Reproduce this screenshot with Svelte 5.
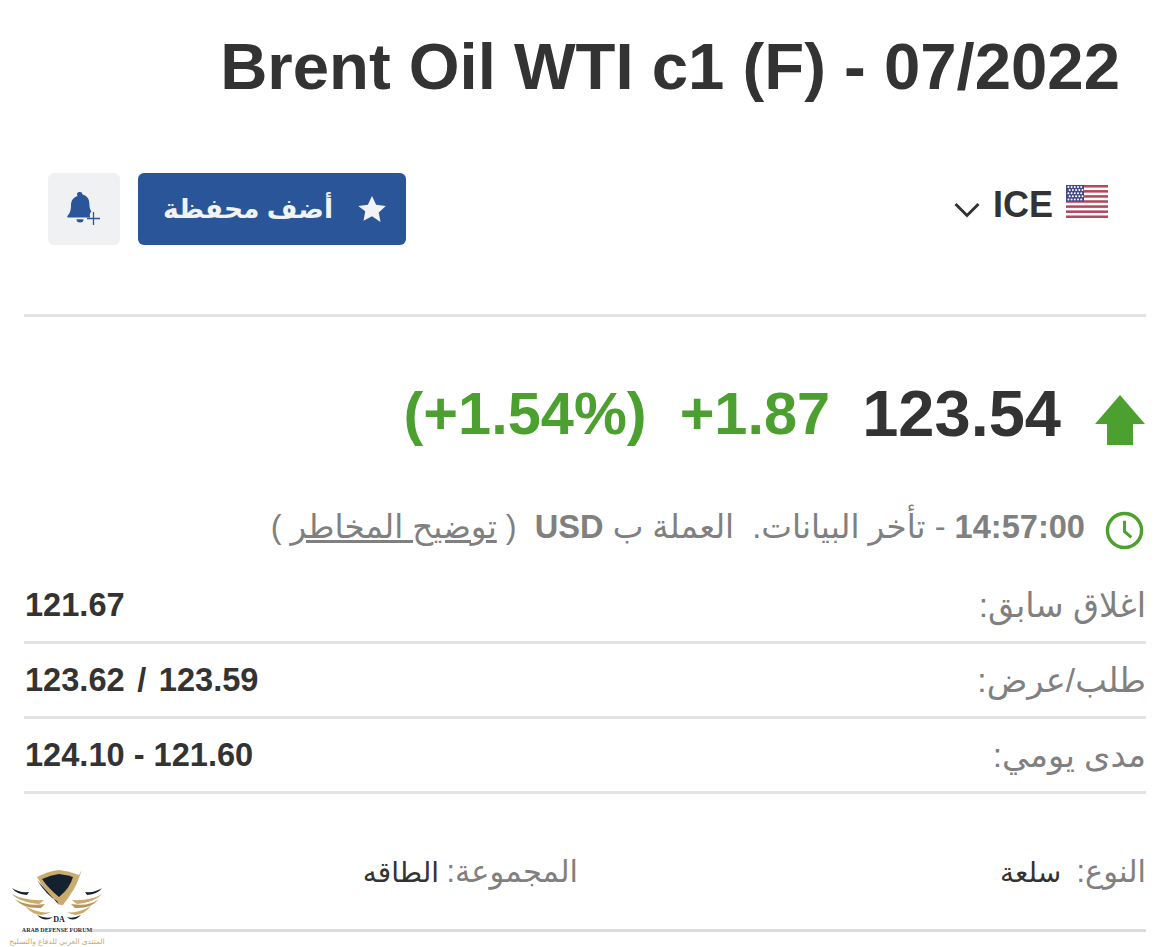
<script>
  const rows = [
    { label: 'اغلاق سابق:', value: '121.67' },
    { label: 'طلب/عرض:', value: '123.62 / 123.59', pre: true },
    { label: 'مدى يومي:', value: '124.10 - 121.60' }
  ];
  const stripes = [0, 1, 2, 3, 4, 5, 6];
  const stars = [];
  for (let r = 0; r < 5; r++) for (let c = 0; c < 5; c++) stars.push({ x: 2.4 + c * 3.2 + (r % 2) * 1.3, y: 2 + r * 3.1 });
</script>

<main class="page" dir="rtl">
  <h1 dir="ltr">Brent Oil WTI c1 (F) - 07/2022</h1>

  <section class="toolbar">
    <div class="exchange">
      <svg class="flag" viewBox="0 0 42 33" width="42" height="33" aria-hidden="true">
        <rect width="42" height="33" fill="#fff" />
        {#each stripes as s}
          <rect y={s * 5.08} width="42" height="2.54" fill="#b5485a" />
        {/each}
        <rect width="18" height="16.500" fill="#454a86" />
        {#each stars as st}
          <circle cx={st.x} cy={st.y} r="1" fill="#fff" />
        {/each}
      </svg>
      <span class="ice" dir="ltr">ICE</span>
      <svg class="chev" viewBox="0 0 26 16" width="26" height="16" aria-hidden="true">
        <path d="M1.500 2 L13 13.500 L24.500 2" fill="none" stroke="#333" stroke-width="3" />
      </svg>
    </div>
    <div class="actions">
      <button class="primary">
        <svg viewBox="0 0 24 24" width="30" height="30" aria-hidden="true">
          <path d="M12 1.500l3.300 7 7.700 1-5.600 5.300 1.400 7.600L12 17.700l-6.800 3.700 1.400-7.600L1 9.500l7.700-1z" fill="#f1f3f6" />
        </svg>
        <span>أضف محفظة</span>
      </button>
      <button class="bell" aria-label="تنبيه">
        <svg viewBox="0 0 34 40" width="34" height="40" aria-hidden="true">
          <path d="M13 3a2.400 2.400 0 0 1 2.400 2.600c4.600 1 7 4.600 7 9.400 0 3 .6 5.500 2 7.500 0 0-1.600 1.500-1.600 3.500 0 1 .2 1.600.4 2.500H1.200c-.8 0-1.300-1-.6-1.800 2-2 3.400-4.800 3.400-10.400 0-4.800 2.600-8.400 6.600-9.400A2.400 2.400 0 0 1 13 3z" fill="#2a5699" />
          <path d="M9.500 30.200h7a3.500 3.200 0 0 1-7 0z" fill="#2a5699" />
          <path d="M26.500 23v13M20 29.500h13" stroke="#2a5699" stroke-width="1.300" fill="none" />
        </svg>
      </button>
    </div>
  </section>

  <section class="quote">
    <svg class="arrow" viewBox="0 0 50 50" width="50" height="50" aria-hidden="true">
      <path d="M25 0 L50 29 H38 V50 H12 V29 H0 Z" fill="#4ca02f" />
    </svg>
    <span class="last">123.54</span>
    <span class="delta" dir="ltr">+1.87</span>
    <span class="pct" dir="ltr">(+1.54%)</span>
  </section>

  <p class="status">
    <svg class="clock" viewBox="0 0 40 40" width="39" height="39" aria-hidden="true">
      <circle cx="20" cy="20" r="17.500" fill="none" stroke="#4ca02f" stroke-width="3.500" />
      <path d="M20 10v11l7 6" fill="none" stroke="#4ca02f" stroke-width="3" />
    </svg>
    <b dir="ltr">14:57:00</b>
    <span>- تأخر البيانات.&nbsp; العملة ب <b>USD</b> &nbsp;( <u>توضيح المخاطر</u> )</span>
  </p>

  <dl class="stats">
    {#each rows as row}
      <div class="row">
        <dt>{row.label}</dt>
        <dd dir="ltr" class:pre={row.pre}>{row.value}</dd>
      </div>
    {/each}
  </dl>

  <section class="meta">
    <div class="cell"><span class="key">النوع:</span> <span class="val">سلعة</span></div>
    <div class="cell second"><span class="key">المجموعة:</span> <span class="val">الطاقه</span></div>
  </section>

  <div class="watermark" dir="ltr">
    <svg viewBox="0 0 100 58" width="100" height="58" aria-hidden="true">
      <path d="M30 9 Q42 3 52 2 Q62 3 72 7 Q70 22 53 37 Q38 24 30 9z" fill="#c9ab6e" />
      <path d="M35 11 Q44 7 52 6 Q60 7 66 9 Q63 20 52 29 Q41 20 35 11z" fill="#14212e" />
      <path d="M52 37 L30 12 Q40 28 50 33z" fill="#14212e" />
      <path d="M53 37 L75 2 Q68 22 56 37z" fill="#c9ab6e" />
      <path d="M5 20 Q9 26 20 27 L22 24 Q12 25 5 20z" fill="#14212e" />
      <path d="M5 26 Q12 34 32 36 Q36 33 37 32 Q18 33 5 26z" fill="#c9ab6e" />
      <path d="M8 31 Q16 41 34 40 L38 36 Q20 39 8 31z" fill="#b89658" />
      <path d="M95 20 Q91 26 80 27 L78 24 Q88 25 95 20z" fill="#14212e" />
      <path d="M95 26 Q88 34 70 36 Q66 33 65 32 Q84 33 95 26z" fill="#c9ab6e" />
      <path d="M92 31 Q84 41 68 40 L64 36 Q82 39 92 31z" fill="#b89658" />
      <path d="M18 38 Q32 46 44 44 Q30 52 18 38z" fill="#c9ab6e" />
      <path d="M84 38 Q70 46 60 44 Q72 52 84 38z" fill="#c9ab6e" />
      <path d="M30 47 Q38 51 46 49 Q38 55 30 47z" fill="#14212e" />
      <path d="M74 47 Q66 51 60 49 Q66 55 74 47z" fill="#14212e" />
      <text x="52" y="54" text-anchor="middle" class="da">DA</text>
    </svg>
    <span class="wm-en">ARAB DEFENSE FORUM</span>
    <span class="wm-ar" dir="rtl">المنتدى العربي للدفاع والتسليح</span>
  </div>
</main>

<style>
  :global(body) {
    margin: 0;
    background: #fff;
  }
  .page {
    position: relative;
    width: 1170px;
    height: 947px;
    box-sizing: border-box;
    padding: 27px 24px 0;
    overflow: hidden;
    font-family: "Liberation Sans", "DejaVu Sans", sans-serif;
    color: #333;
  }
  h1 {
    margin: 0;
    padding-right: 26px;
    font-size: 65.300px;
    line-height: 80px;
    font-weight: 700;
    text-align: right;
    color: #333;
  }
  .toolbar {
    display: flex;
    justify-content: space-between;
    align-items: flex-start;
    margin-top: 66px;
    height: 141px;
    border-bottom: 3px solid #e3e3e6;
  }
  .exchange {
    display: flex;
    align-items: center;
    gap: 13px;
    padding: 12px 38px 0 0;
  }
  .flag {
    display: block;
    margin-top: -8px;
  }
  .ice {
    font-size: 36px;
    font-weight: 700;
    line-height: 40px;
  }
  .chev {
    margin-top: 10px;
  }
  .actions {
    display: flex;
    gap: 18px;
    padding-left: 24px;
  }
  button {
    border: 0;
    border-radius: 6px;
    font-family: inherit;
    height: 72px;
    display: flex;
    align-items: center;
    justify-content: center;
    padding: 0;
  }
  .primary {
    width: 268px;
    background: #2a5699;
    color: #f1f3f6;
    font-size: 26.500px;
    font-weight: 700;
    gap: 24px;
    padding-left: 8px;
    justify-content: flex-start;
    padding-right: 19px;
  }
  .bell {
    width: 72px;
    background: #f0f1f3;
  }
  .quote {
    display: flex;
    align-items: center;
    gap: 30px;
    margin-top: 60px;
    padding-right: 1px;
    height: 72px;
  }
  .arrow {
    margin-top: 14px;
    margin-left: 4px;
  }
  .last {
    margin-left: 2px;
    font-size: 65px;
    font-weight: 700;
    color: #333;
  }
  .delta, .pct {
    font-size: 59.500px;
    font-weight: 700;
    color: #4ca02f;
  }
  .delta {
    margin-left: 3px;
  }
  .status {
    display: flex;
    align-items: center;
    gap: 20px;
    margin: 56px 0 0;
    padding-right: 2px;
    height: 44px;
    font-size: 32.600px;
    color: #808080;
    white-space: nowrap;
  }
  .status span {
    margin-right: -11px;
  }
  .status b { font-weight: 700; }
  .status u { text-decoration: underline; }
  .clock {
    margin-top: 6px;
  }
  .stats {
    margin: 20px 0 0;
  }
  .row {
    display: flex;
    justify-content: space-between;
    align-items: center;
    height: 72px;
    border-bottom: 3px solid #e3e3e6;
  }
  dt {
    font-size: 33.600px;
    color: #808080;
  }
  dd {
    margin: 0;
    padding-left: 1px;
    font-size: 32.600px;
    font-weight: 700;
    color: #333;
  }
  dd.pre {
    word-spacing: 3.500px;
  }
  .meta {
    display: flex;
    height: 116px;
    padding-top: 19px;
    align-items: center;
    border-bottom: 3px solid #dcdcdc;
  }
  .cell:first-child {
    width: 568px;
  }
  .cell .key {
    color: #808080;
    font-size: 30.500px;
  }
  .cell .val {
    margin-right: 11px;
    color: #333;
    font-size: 28px;
  }
  .cell.second .val {
    margin-right: 3px;
  }
  .watermark {
    position: absolute;
    left: 5px;
    top: 868px;
    width: 104px;
    height: 79px;
    display: flex;
    flex-direction: column;
    align-items: center;
  }
  .da {
    font-family: "Liberation Serif", serif;
    font-size: 8px;
    font-weight: 700;
    fill: #14212e;
  }
  .wm-en {
    line-height: 9px;
    font-family: "Liberation Serif", serif;
    font-size: 6px;
    font-weight: 700;
    color: #1c2a38;
    background: #fff;
    white-space: nowrap;
  }
  .wm-ar {
    margin-top: 2px;
    line-height: 10px;
    font-size: 7.500px;
    color: #c9ab6e;
    white-space: nowrap;
  }
</style>
